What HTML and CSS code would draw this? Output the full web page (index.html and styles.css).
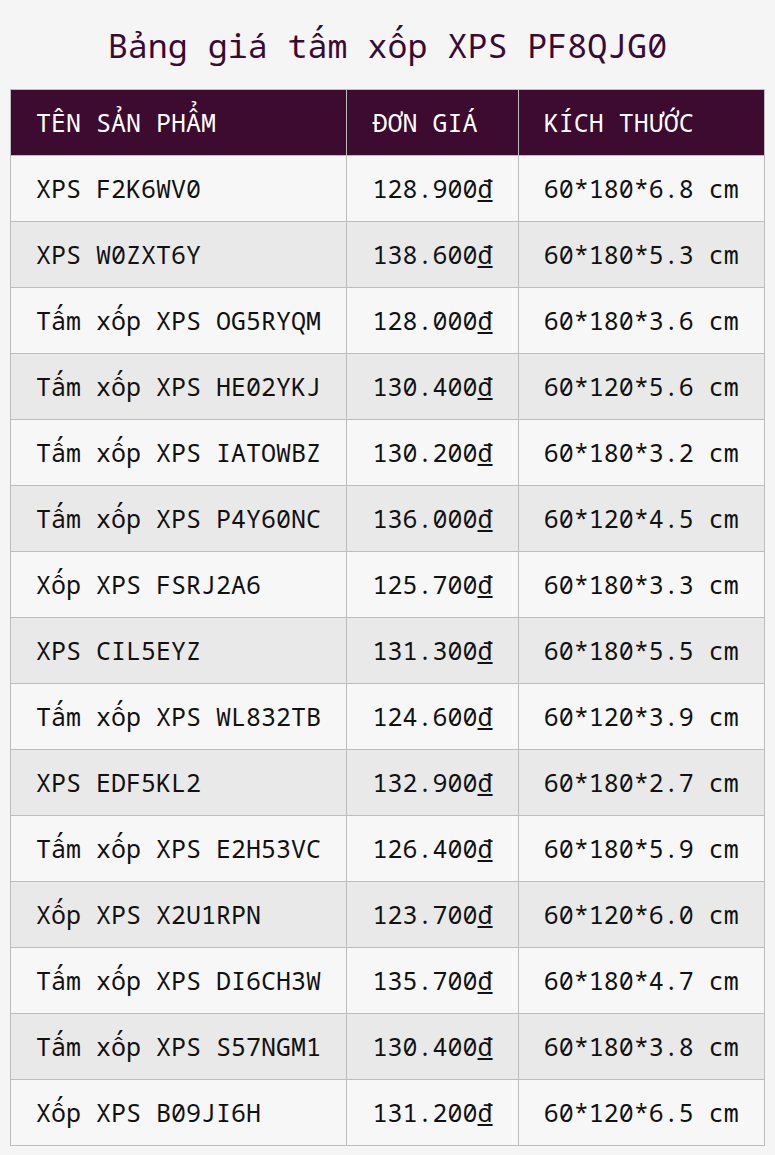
FILE: index.html
```html
<!DOCTYPE html>
<html lang="vi">
<head>
<meta charset="utf-8">
<title>Bảng giá tấm xốp XPS PF8QJG0</title>
<link rel="stylesheet" href="styles.css">
</head>
<body>
<h1 class="title">Bảng giá tấm xốp XPS PF8QJG0</h1>
<table class="price-table">
  <thead>
    <tr><th>TÊN SẢN PHẨM</th><th>ĐƠN GIÁ</th><th>KÍCH THƯỚC</th></tr>
  </thead>
  <tbody>
    <tr><td>XPS F2K6WV0</td><td>128.900₫</td><td>60*180*6.8 cm</td></tr>
    <tr><td>XPS W0ZXT6Y</td><td>138.600₫</td><td>60*180*5.3 cm</td></tr>
    <tr><td>Tấm xốp XPS OG5RYQM</td><td>128.000₫</td><td>60*180*3.6 cm</td></tr>
    <tr><td>Tấm xốp XPS HE02YKJ</td><td>130.400₫</td><td>60*120*5.6 cm</td></tr>
    <tr><td>Tấm xốp XPS IATOWBZ</td><td>130.200₫</td><td>60*180*3.2 cm</td></tr>
    <tr><td>Tấm xốp XPS P4Y60NC</td><td>136.000₫</td><td>60*120*4.5 cm</td></tr>
    <tr><td>Xốp XPS FSRJ2A6</td><td>125.700₫</td><td>60*180*3.3 cm</td></tr>
    <tr><td>XPS CIL5EYZ</td><td>131.300₫</td><td>60*180*5.5 cm</td></tr>
    <tr><td>Tấm xốp XPS WL832TB</td><td>124.600₫</td><td>60*120*3.9 cm</td></tr>
    <tr><td>XPS EDF5KL2</td><td>132.900₫</td><td>60*180*2.7 cm</td></tr>
    <tr><td>Tấm xốp XPS E2H53VC</td><td>126.400₫</td><td>60*180*5.9 cm</td></tr>
    <tr><td>Xốp XPS X2U1RPN</td><td>123.700₫</td><td>60*120*6.0 cm</td></tr>
    <tr><td>Tấm xốp XPS DI6CH3W</td><td>135.700₫</td><td>60*180*4.7 cm</td></tr>
    <tr><td>Tấm xốp XPS S57NGM1</td><td>130.400₫</td><td>60*180*3.8 cm</td></tr>
    <tr><td>Xốp XPS B09JI6H</td><td>131.200₫</td><td>60*120*6.5 cm</td></tr>
  </tbody>
</table>
</body>
</html>
```
FILE: styles.css
```css
html, body {
  margin: 0;
  background: #f5f5f5;
}
body {
  padding: 0 10px;
  font-family: "Noto Sans Mono", "DejaVu Sans Mono", monospace;
  color: #111;
}
.title {
  margin: 26px 0 24px;
  height: 39px;
  font-size: 33.3px;
  line-height: 39px;
  font-weight: normal;
  text-align: center;
  color: #3a0a32;
}
.price-table {
  width: 100%;
  border-collapse: collapse;
  font-size: 25px;
}
.price-table th,
.price-table td {
  padding: 18px 25px;
  height: 29px;
  line-height: 29px;
  border: 1px solid #bdbdbd;
  text-align: left;
  white-space: nowrap;
}
.price-table th {
  background: #3c0b2f;
  color: #fff;
  font-weight: normal;
}
.price-table tbody tr:nth-child(odd) td {
  background: #f7f7f7;
}
.price-table tbody tr:nth-child(even) td {
  background: #e9e9e9;
}
```
